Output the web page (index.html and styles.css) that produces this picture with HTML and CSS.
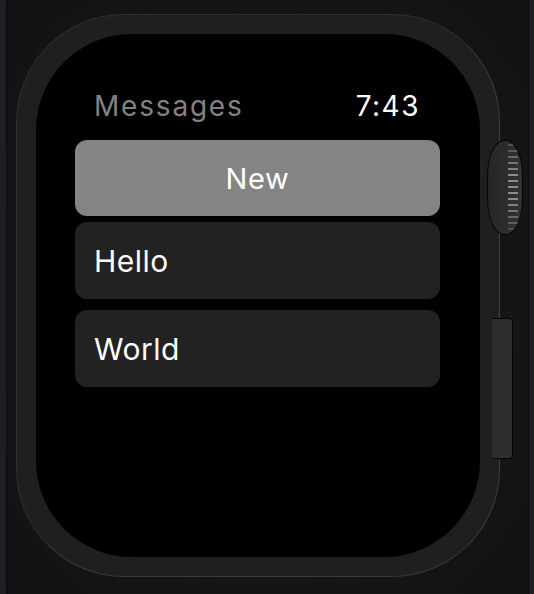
FILE: index.html
```html
<!DOCTYPE html>
<html>
<head>
<meta charset="utf-8">
<link rel="stylesheet" href="styles.css">
</head>
<body>
<div class="frame">
  <div class="watch">
    <div class="screen">
      <div class="header">
        <span class="title">Messages</span>
        <span class="time">7:43</span>
      </div>
      <div class="btn-new">New</div>
      <div class="card card-first">Hello</div>
      <div class="card card-second">World</div>
    </div>
    <div class="crown"><div class="ridges"></div></div>
    <div class="side-button"></div>
  </div>
</div>
</body>
</html>
```

FILE: styles.css
```css
html, body {
  margin: 0;
  padding: 0;
}
body {
  width: 534px;
  height: 594px;
  background: #1f2023;
  overflow: hidden;
  display: flex;
  font-family: "Inter", "Liberation Sans", sans-serif;
}
.frame {
  margin-left: 6px;
  width: 523px;
  height: 594px;
  border-left: 1px solid #0b0b0c;
  border-right: 1px solid #0b0b0c;
  background: radial-gradient(ellipse at 50% 50%, #18191b 0%, #141517 70%, #111213 100%);
  padding: 14px 0 0 9px;
  box-sizing: border-box;
}
.watch {
  position: relative;
  width: 484px;
  height: 563px;
  box-sizing: border-box;
  border-radius: 108px;
  background: #1f1f1f;
  border: 1px solid #2e2e2e;
  border-right-color: #3e3e3e;
  border-bottom-color: #3a3a3a;
  padding: 19px;
}
.screen {
  width: 444px;
  height: 523px;
  box-sizing: border-box;
  background: #000;
  border-radius: 96px;
  padding: 52px 40px 0 39px;
}
.header {
  display: flex;
  justify-content: space-between;
  align-items: baseline;
  height: 40px;
  padding: 0 20px 0 19px;
  line-height: 40px;
  font-size: 28px;
}
.title {
  color: #838383;
  letter-spacing: 1.8px;
}
.time {
  color: #ffffff;
  letter-spacing: 1.5px;
}
.btn-new {
  margin-top: 14px;
  height: 76px;
  border-radius: 12px;
  background: #848484;
  color: #fff;
  font-size: 29px;
  display: flex;
  align-items: center;
  justify-content: center;
  letter-spacing: 0.6px;
}
.card {
  height: 77px;
  border-radius: 12px;
  background: #222222;
  color: #fff;
  font-size: 30px;
  display: flex;
  align-items: center;
  padding-left: 19px;
  letter-spacing: 0.5px;
}
.card-first {
  margin-top: 6px;
}
.card-second {
  margin-top: 11px;
}
.crown {
  position: absolute;
  left: 470px;
  top: 125px;
  width: 36px;
  height: 95px;
  box-sizing: border-box;
  border: 1.5px solid #050505;
  border-radius: 17px / 36px;
  background: linear-gradient(to right, #262626 0%, #2c2c2c 55%, #333 100%);
  overflow: hidden;
}
.ridges {
  position: absolute;
  left: 20px;
  top: 3px;
  width: 10px;
  height: 86px;
  background: repeating-linear-gradient(to bottom, #8c8c8c 0 2px, transparent 2px 6px);
  -webkit-mask-image: linear-gradient(to bottom, rgba(0,0,0,0.35), #000 35%, #000 65%, rgba(0,0,0,0.35));
  mask-image: linear-gradient(to bottom, rgba(0,0,0,0.35), #000 35%, #000 65%, rgba(0,0,0,0.35));
}
.side-button {
  position: absolute;
  left: 475px;
  top: 303px;
  width: 21px;
  height: 141px;
  box-sizing: border-box;
  background: #2d2d2d;
  border: 1px solid #050505;
  border-left: none;
  border-radius: 0 4px 4px 0;
}
```
